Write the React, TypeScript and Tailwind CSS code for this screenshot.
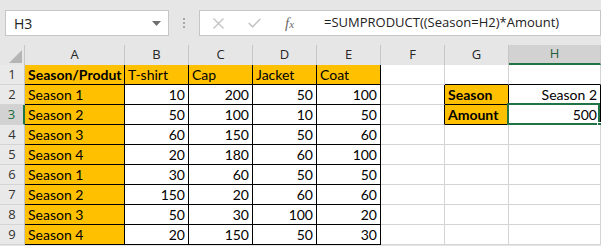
import React from "react";

const ORANGE = "bg-[#ffc000]";

type Cell = {
  text?: string;
  bold?: boolean;
  align?: "left" | "right";
  bg?: string;
  r?: boolean; // black right border
  b?: boolean; // black bottom border
};

const rows: number[][] = [
  [10, 200, 50, 100],
  [50, 100, 10, 50],
  [60, 150, 50, 60],
  [20, 180, 60, 100],
  [30, 60, 50, 50],
  [150, 20, 60, 60],
  [50, 30, 100, 20],
  [20, 150, 50, 30],
];

function buildRow(r: number): Cell[] {
  const cells: Cell[] = [];
  if (r === 1) {
    cells.push({ text: "Season/Produt", bold: true, bg: ORANGE, r: true, b: true });
    ["T-shirt", "Cap", "Jacket", "Coat"].forEach((t) =>
      cells.push({ text: t, bg: ORANGE, r: true, b: true })
    );
    cells.push({});
    cells.push({ b: true });
    cells.push({ b: true });
    return cells;
  }
  const season = ((r - 2) % 4) + 1;
  cells.push({ text: `Season ${season}`, bg: ORANGE, r: true, b: true });
  rows[r - 2].forEach((n) => cells.push({ text: String(n), align: "right", r: true, b: true }));
  if (r === 2) {
    cells.push({ r: true });
    cells.push({ text: "Season", bold: true, bg: ORANGE, r: true, b: true });
    cells.push({ text: "Season 2", align: "right", r: true, b: true });
  } else if (r === 3) {
    cells.push({ r: true });
    cells.push({ text: "Amount", bold: true, bg: ORANGE, r: true, b: true });
    cells.push({ text: "500", align: "right", r: true, b: true });
  } else {
    cells.push({});
    cells.push({});
    cells.push({});
  }
  return cells;
}

const cols = ["A", "B", "C", "D", "E", "F", "G", "H"];

export default function App() {
  return (
    <div className="w-[601px] h-[246px] overflow-hidden bg-[#e6e6e6] select-none">
      {/* Formula bar */}
      <div className="h-[45px] flex items-start pt-[10px]">
        <div className="ml-[5px] w-[164px] h-[26px] bg-white border border-[#c6c6c6] flex items-center justify-between pl-[8px] pr-[7px]">
          <span className="text-[14px] text-[#222] font-['Open_Sans',sans-serif]">H3</span>
          <svg width="9" height="5" viewBox="0 0 9 5">
            <path d="M0 0 L9 0 L4.5 5 Z" fill="#6f6f6f" />
          </svg>
        </div>
        <div className="w-[30px] h-[26px] flex flex-col items-center justify-center gap-[2px]">
          <div className="w-[2px] h-[2px] bg-[#a6a6a6]" />
          <div className="w-[2px] h-[2px] bg-[#a6a6a6]" />
          <div className="w-[2px] h-[2px] bg-[#a6a6a6]" />
        </div>
        <div className="flex-1 h-[26px] bg-white border border-[#c6c6c6] flex items-center">
          <div className="w-[124px] flex items-center h-full">
            <svg className="ml-[13px]" width="11" height="11" viewBox="0 0 11 11">
              <path d="M0.5 0.5 L10.5 10.5 M10.5 0.5 L0.5 10.5" stroke="#c4c4c4" strokeWidth="1.4" />
            </svg>
            <svg className="ml-[24px]" width="13" height="10" viewBox="0 0 13 10">
              <path d="M0.7 5 L4.5 8.8 L12.3 1" stroke="#c4c4c4" strokeWidth="1.6" fill="none" />
            </svg>
            <span className="ml-[24px] text-[15px] italic text-[#6a6a6a] font-['Liberation_Serif',serif] leading-none">
              f<span className="text-[11px]">x</span>
            </span>
          </div>
          <span className="text-[13px] text-[#222] font-['Open_Sans',sans-serif]">
            =SUMPRODUCT((Season=H2)*Amount)
          </span>
        </div>
      </div>

      {/* Grid */}
      <div className="grid grid-cols-[25px_100px_64px_64px_64px_64px_64px_64px_92px] grid-rows-[20px_repeat(9,20px)] bg-white">
        <div className="bg-[#e6e6e6] border-r border-[#c6c6c6] relative">
          <svg className="absolute left-[9px] top-[5px]" width="13" height="13" viewBox="0 0 13 13">
            <path d="M13 0 L13 13 L0 13 Z" fill="#b5b5b5" />
          </svg>
        </div>
        {cols.map((c) => {
          const sel = c === "H";
          return (
            <div
              key={c}
              className={
                sel
                  ? "bg-[#d2d2d2] border-b-2 border-b-[#217346] border-r border-r-[#c6c6c6] flex items-center justify-center text-[13px] text-[#1e5c3a] font-['Open_Sans',sans-serif]"
                  : "bg-[#e6e6e6] border-r border-[#c6c6c6] flex items-center justify-center text-[13px] text-[#262626] font-['Open_Sans',sans-serif]"
              }
            >
              {c}
            </div>
          );
        })}

        {Array.from({ length: 9 }, (_, i) => i + 1).map((r) => {
          const cells = buildRow(r);
          const rowSel = r === 3;
          return (
            <React.Fragment key={r}>
              <div
                className={
                  rowSel
                    ? "bg-[#d2d2d2] border-r-2 border-r-[#217346] border-b border-b-[#d4d4d4] flex items-center justify-center text-[13px] text-[#1e6b41] font-['Open_Sans',sans-serif]"
                    : "bg-[#e9e9e9] border-r border-r-[#c6c6c6] border-b border-b-[#d4d4d4] flex items-center justify-center text-[13px] text-[#333] font-['Open_Sans',sans-serif]"
                }
              >
                {r}
              </div>
              {cells.map((cell, ci) => {
                const isH3 = r === 3 && ci === 7;
                const cls = [
                  "relative flex items-end pb-[1px] px-[3px] whitespace-nowrap text-[14px] leading-[17px] text-black font-['Lato',sans-serif]",
                  cell.bg ?? "bg-white",
                  cell.r ? "border-r border-r-black" : "border-r border-r-[#d4d4d4]",
                  cell.b ? "border-b border-b-black" : "border-b border-b-[#d4d4d4]",
                  cell.bold ? "font-bold" : "",
                  cell.align === "right" ? "justify-end" : "justify-start",
                  isH3 ? "" : "overflow-hidden",
                ].join(" ");
                return (
                  <div key={ci} className={cls}>
                    {cell.text}
                    {isH3 && (
                      <>
                        <div className="absolute -left-[2px] -top-[2px] right-[0px] bottom-[-1px] border-2 border-[#217346] pointer-events-none" />
                        <div className="absolute -right-[3px] -bottom-[4px] w-[6px] h-[6px] bg-[#217346] border border-white" />
                      </>
                    )}
                  </div>
                );
              })}
            </React.Fragment>
          );
        })}
      </div>
    </div>
  );
}
